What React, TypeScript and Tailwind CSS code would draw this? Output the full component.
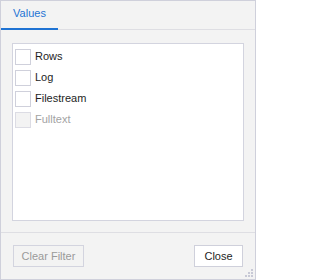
import { useState } from 'react';

const items = [
  { label: 'Rows', disabled: false },
  { label: 'Log', disabled: false },
  { label: 'Filestream', disabled: false },
  { label: 'Fulltext', disabled: true },
];

export default function App() {
  const [checked, setChecked] = useState<Record<string, boolean>>({});

  return (
    <div
      className="relative flex h-[280px] w-[256px] flex-col border border-[#cfd0db] bg-[#f3f3f3] text-[11px] text-[#1e1e1e]"
      style={{ fontFamily: '"Liberation Sans", Arial, sans-serif' }}
    >
      <div className="flex h-[29px] shrink-0 border-b border-[#dedee3]">
        <div className="-mb-px flex w-[57px] items-center justify-center border-b-2 border-[#1f73d3] pb-[2px] text-[#1f73d3]">
          Values
        </div>
      </div>

      <div className="flex flex-1 flex-col px-[11px] pt-[13px] pb-[11px]">
        <ul className="flex-1 border border-[#d3d4df] bg-white px-[2px] pt-[2px]">
          {items.map((item) => (
            <li
              key={item.label}
              className={`flex h-[21px] items-center gap-[4px] ${item.disabled ? 'text-[#a3a3a3]' : ''}`}
              onClick={() =>
                !item.disabled &&
                setChecked((c) => ({ ...c, [item.label]: !c[item.label] }))
              }
            >
              <span
                className={`h-[16px] w-[16px] shrink-0 border ${
                  item.disabled ? 'border-[#dcdce4] bg-[#f3f3f3]' : 'border-[#cfd0db] bg-white'
                }`}
              >
                {checked[item.label] && (
                  <svg viewBox="0 0 16 16" className="h-full w-full">
                    <path d="M3.5 8l3 3 6-6" fill="none" stroke="#1f73d3" strokeWidth="1.6" />
                  </svg>
                )}
              </span>
              <span className="pb-px">{item.label}</span>
            </li>
          ))}
        </ul>
      </div>

      <div className="flex shrink-0 items-center justify-between border-t border-[#dedee3] px-[12px] pt-[12px] pb-[12px]">
        <button className="h-[22px] w-[71px] border border-[#d3d4df] text-[#9a9a9a]" disabled>
          Clear Filter
        </button>
        <button className="h-[22px] w-[49px] border border-[#cfd0db] bg-white text-[#1e1e1e]">
          Close
        </button>
      </div>

      <svg className="absolute right-[1px] bottom-[1px]" width="10" height="10" viewBox="0 0 10 10">
        <g fill="#c8c9d6">
          <rect x="7" y="1" width="2" height="2" />
          <rect x="4" y="4" width="2" height="2" />
          <rect x="7" y="4" width="2" height="2" />
          <rect x="1" y="7" width="2" height="2" />
          <rect x="4" y="7" width="2" height="2" />
          <rect x="7" y="7" width="2" height="2" />
        </g>
      </svg>
    </div>
  );
}
